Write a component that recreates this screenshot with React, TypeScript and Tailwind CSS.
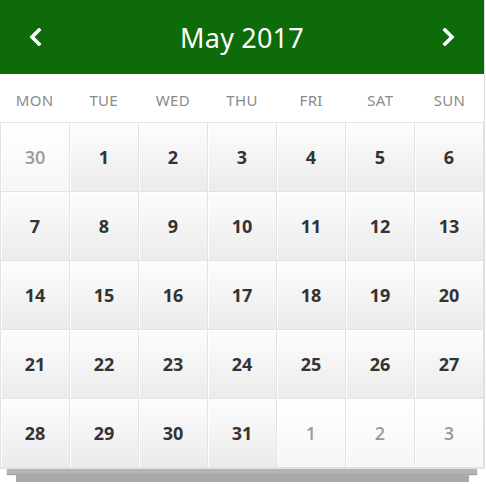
import React from 'react';

const DAYS = ['MON', 'TUE', 'WED', 'THU', 'FRI', 'SAT', 'SUN'];

type Cell = { n: number; muted?: boolean };

const cells: Cell[] = [
  { n: 30, muted: true },
  ...Array.from({ length: 31 }, (_, i) => ({ n: i + 1 })),
  { n: 1, muted: true },
  { n: 2, muted: true },
  { n: 3, muted: true },
];

const Chevron: React.FC<{ dir: 'left' | 'right' }> = ({ dir }) => (
  <svg width="14" height="18" viewBox="0 0 14 18" className="block">
    <polyline
      points={dir === 'left' ? '10,2 3,9 10,16' : '4,2 11,9 4,16'}
      fill="none"
      stroke="white"
      strokeWidth="3.6"
      strokeLinecap="square"
    />
  </svg>
);

export default function App() {
  return (
    <div className="w-[486px] h-[484px] bg-white" style={{ fontFamily: '"Open Sans", sans-serif' }}>
      <div className="w-[485px] border-r border-[#dcdcdc] bg-white">
        {/* header */}
        <div className="h-[74px] bg-[#0d6b0a] flex items-center justify-between px-[25px]">
          <button className="p-1">
            <Chevron dir="left" />
          </button>
          <div
            className="text-white text-[27px] font-normal tracking-[0.2px] pt-[2px]"
            style={{ fontFamily: '"Noto Sans", "Open Sans", sans-serif' }}
          >
            May 2017
          </div>
          <button className="p-1">
            <Chevron dir="right" />
          </button>
        </div>

        {/* weekday names */}
        <div className="grid grid-cols-7 h-[48px] items-center">
          {DAYS.map((d) => (
            <div
              key={d}
              className="text-center text-[15px] tracking-[0.3px] text-[#8a8a8a] pt-[5px]"
              style={{ fontFamily: '"Noto Sans", sans-serif' }}
            >
              {d}
            </div>
          ))}
        </div>

        {/* days */}
        <div className="grid grid-cols-7 border-t border-l border-[#e3e3e3] border-b">
          {cells.map((c, i) => (
            <div
              key={i}
              className={
                'h-[69px] border-r border-b border-[#e3e3e3] flex items-center justify-center text-[18px] shadow-[inset_1px_1px_0_#fff] ' +
                (c.muted
                  ? 'bg-gradient-to-b from-white to-[#f6f6f6] text-[#9a9a9a] font-semibold'
                  : 'bg-gradient-to-b from-[#fdfdfd] to-[#ebebeb] text-[#333] font-bold')
              }
            >
              {c.n}
            </div>
          ))}
        </div>
      </div>

      {/* stacked sheets */}
      <div className="h-[5px] ml-[7px] w-[470px] bg-[#b4b4b4] shadow-[0_1px_1px_#999]" />
      <div className="h-[8px] ml-[16px] w-[453px] bg-[#a9a9a9]" />
    </div>
  );
}
